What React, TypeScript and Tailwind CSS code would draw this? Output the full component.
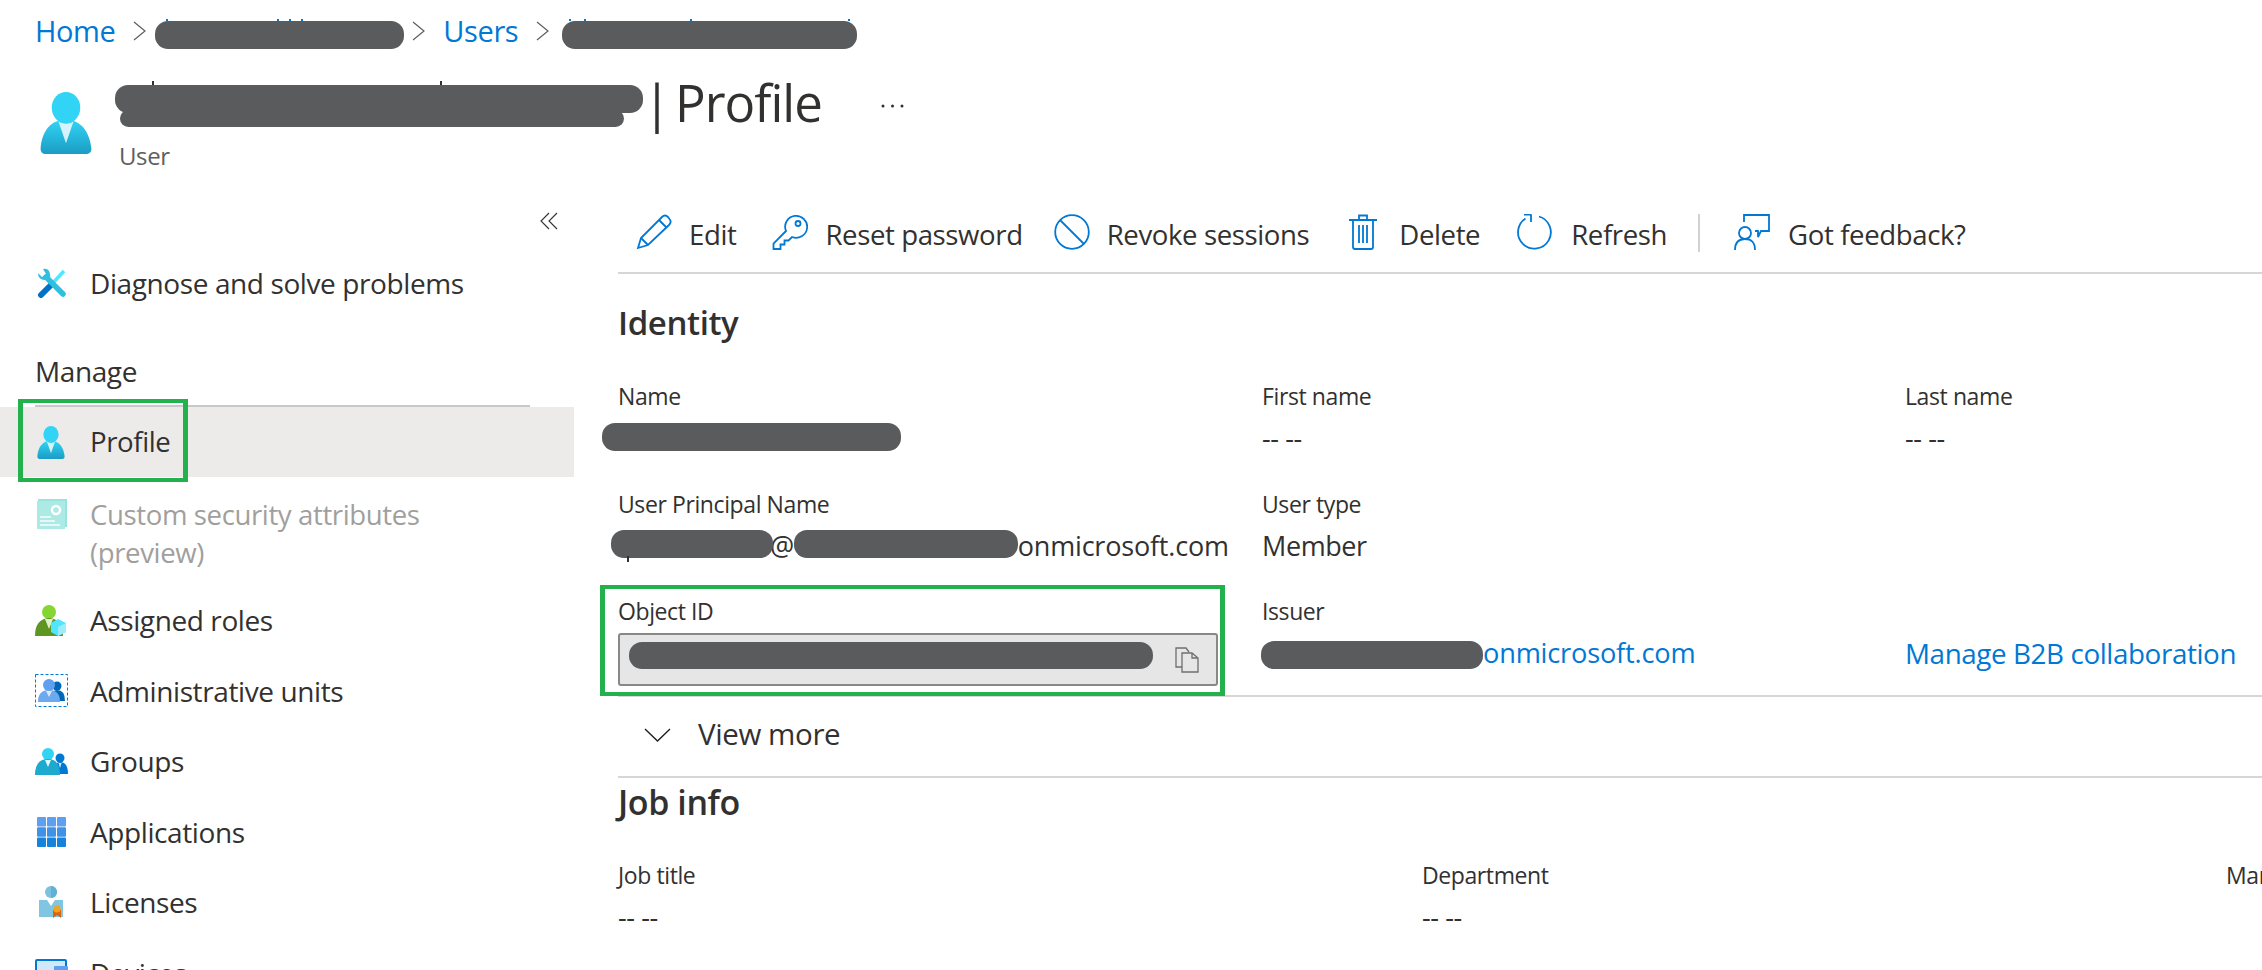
import React from "react";

type IconProps = { className?: string };

// azure style person, shared by the header and the profile row
const PersonIcon = ({ className, id }: IconProps & { id: string }) => (
  <svg viewBox="0 0 18 18" preserveAspectRatio="none" className={className}>
    <defs>
      <linearGradient id={`${id}-a`} x1="0" y1="0" x2="0" y2="1">
        <stop offset="0" stopColor="#32d4f5" />
        <stop offset="1" stopColor="#1b9cc4" />
      </linearGradient>
    </defs>
    <path d="M15.72 18a1.45 1.45 0 0 0 1.45-1.45.47.47 0 0 0 0-.17C16.59 11.81 14 8.09 9 8.09s-7.66 3.24-8.17 8.3A1.46 1.46 0 0 0 2.14 18z" fill={`url(#${id}-a)`} />
    <path d="M9 9.17a4.59 4.59 0 0 1-2.48-.73L9 14.86l2.44-6.38A4.53 4.53 0 0 1 9 9.17z" fill="#fff" opacity=".8" />
    <circle cx="9" cy="4.58" r="4.58" fill="#32d4f5" />
  </svg>
);

const DiagnoseIcon = ({ className }: IconProps) => (
  <svg viewBox="0 0 30 30" className={className}>
    <path d="M27 3 L15 16" stroke="#50e6ff" strokeWidth="3.500" />
    <path d="M14 17 L4 27" stroke="#0072c6" strokeWidth="6" strokeLinecap="round" />
    <path d="M9 9 L26 26" stroke="#32bedd" strokeWidth="5.500" strokeLinecap="round" />
    <path d="M1 5 L5 9 L9 6 L6 1 Q12 0 13 6 Q14 10 11 12 L7 12 Q1 11 1 5 Z" fill="#32bedd" />
  </svg>
);

const CustomAttrIcon = ({ className }: IconProps) => (
  <svg viewBox="0 0 30 30" className={className}>
    <rect x="1" y="0" width="29" height="28" fill="#8fe0da" />
    <rect x="0" y="2" width="28" height="28" fill="#a3e8e3" />
    <circle cx="19" cy="11" r="4" fill="none" stroke="#fff" strokeWidth="2.500" />
    <path d="M3 18h11M3 22h15M3 26h20" stroke="#e4f8f6" strokeWidth="2" />
  </svg>
);

const RolesIcon = ({ className }: IconProps) => (
  <svg viewBox="0 0 31 31" className={className}>
    <circle cx="14" cy="7" r="7" fill="#86d633" />
    <path d="M0 31 Q0 14 14 13 Q28 14 28 31 Z" fill="#5e9624" />
    <path d="M10 14 L14 24 L18 14 Z" fill="#dff3c8" />
    <path d="M23 14 L31 18 V27 L23 31 L16 27 V18 Z" fill="#50e6ff" />
    <path d="M23 22 L31 18 V27 L23 31 Z" fill="#9cebff" />
  </svg>
);

const AdminUnitsIcon = ({ className }: IconProps) => (
  <svg viewBox="0 0 33 33" className={className}>
    <rect x=".5" y=".5" width="32" height="32" fill="none" stroke="#0078d4" strokeDasharray="3 2" />
    <circle cx="22" cy="12" r="4.500" fill="#0067b8" />
    <path d="M15 27 Q15 16 22 16 Q30 16 30 27 Z" fill="#0067b8" />
    <circle cx="14" cy="11" r="6" fill="#5ea0ef" />
    <path d="M3 28 Q3 16 14 16 Q25 16 25 28 Z" fill="#6ca9f1" />
    <path d="M11 17 L14 23 L17 17 Z" fill="#dbe9fb" />
  </svg>
);

const GroupsIcon = ({ className }: IconProps) => (
  <svg viewBox="0 0 33 27" className={className}>
    <circle cx="25" cy="10" r="4.500" fill="#0078d4" />
    <path d="M19 26 Q19 14 25 14 Q33 14 33 26 Z" fill="#0078d4" />
    <path d="M23.500 15 L25 20 L26.500 15 Z" fill="#dbe9fb" />
    <circle cx="13" cy="6" r="6" fill="#32d4f5" />
    <path d="M0 27 Q0 11 13 11 Q25 11 25 27 Z" fill="#1ea9cf" />
    <path d="M10 12 L13 19 L16 12 Z" fill="#e3f8fc" />
  </svg>
);

const AppsIcon = ({ className }: IconProps) => (
  <svg viewBox="0 0 29 30" className={className}>
    {[0, 1, 2].map((row) =>
      [0, 1, 2].map((col) => (
        <rect key={`${row}-${col}`} x={col * 10} y={row * 10.2} width="9" height="9.500" rx="1" fill={["#5ea0ef", "#3f92e6", "#1582dc"][row]} />
      ))
    )}
  </svg>
);

const LicensesIcon = ({ className }: IconProps) => (
  <svg viewBox="0 0 24 32" className={className}>
    <circle cx="12" cy="6" r="6" fill="#7cc1de" />
    <path d="M12 0 A6 6 0 0 1 12 12 Z" fill="#5fb2d3" />
    <path d="M0 14 L8 14 L12 20 L16 14 L24 14 V31 H0 Z" fill="#80c5e2" />
    <path d="M14 24 V32 L18 29 L22 32 V24 Z" fill="#d9660f" />
    <circle cx="18" cy="23" r="3.500" fill="#f2a41f" />
  </svg>
);

const DevicesIcon = ({ className }: IconProps) => (
  <svg viewBox="0 0 33 28" className={className}>
    <rect x="1" y="1" width="30" height="24" rx="1" fill="#cfe8fa" stroke="#0078d4" strokeWidth="2" />
    <rect x="19" y="7" width="14" height="21" rx="1" fill="#5ea0ef" />
  </svg>
);

const blue = { fill: "none", stroke: "#0078d4", strokeWidth: 1.8 };

const PencilIcon = () => (
  <svg viewBox="0 0 36 36" className="w-[36px] h-[36px]" {...blue}>
    <path d="M2 34 L5 24 L26 3 Q29 0 32 3 L33.500 5 Q36 8 33 11 L12 31 Z" />
    <path d="M5 24 L12 31 M23 6 L30.500 13.500" />
  </svg>
);
const KeyIcon = () => (
  <svg viewBox="0 0 36 36" className="w-[36px] h-[36px]" {...blue}>
    <path d="M14 17 L1.500 29.500 V35 H8.500 V30.500 H12.500 V26.500 H16.500 L20 23 A11 11 0 1 0 14 17 Z" />
    <circle cx="26" cy="9.500" r="2.500" />
  </svg>
);
const RevokeIcon = () => (
  <svg viewBox="0 0 36 36" className="w-[36px] h-[36px]" {...blue}>
    <circle cx="18" cy="18" r="16.800" />
    <path d="M6 6 L30 30" />
  </svg>
);
const TrashIcon = () => (
  <svg viewBox="0 0 28 36" className="w-[28px] h-[36px]" {...blue}>
    <path d="M0 6 H28 M4 6 V33 Q4 35 6 35 H22 Q24 35 24 33 V6 M10 6 V1.500 H18 V6 M10 11 V29 M14 11 V29 M18 11 V29" />
  </svg>
);
const RefreshIcon = () => (
  <svg viewBox="0 0 36 36" className="w-[36px] h-[36px]" {...blue}>
    <path d="M23 2.500 A16.400 16.400 0 1 1 9.500 4.500" />
    <path d="M8 0.500 H15.500 M15 0.500 V8" />
  </svg>
);
const FeedbackIcon = () => (
  <svg viewBox="0 0 36 36" className="w-[36px] h-[36px]" {...blue}>
    <path d="M10 8 V1 H35 V17 H27 L24 23 V17 H21" />
    <circle cx="11" cy="19" r="6" />
    <path d="M1 36 Q1 25 11 25 Q21 25 21 36" />
  </svg>
);
const CopyIcon = () => (
  <svg viewBox="0 0 24 26" className="w-[24px] h-[26px]" fill="none" stroke="#6f6f6f" strokeWidth="1.300">
    <path d="M7 20 H1 V1 H11 L14 5" />
    <path d="M7 6 H17 L23 11 V25 H7 Z M17 6 V11 H23" />
  </svg>
);

// the grey blobs somebody painted over private values
const Blob = ({ className }: IconProps) => <span className={`block bg-[#5a5b5d] rounded-[13px] ${className}`} />;

// ascender tips of the hidden text, they stick out above the blobs
const Tip = ({ className }: IconProps) => <span className={`absolute w-[2px] ${className}`} />;

const Chevron = ({ className }: IconProps) => (
  <svg viewBox="0 0 13 20" className={`w-[13px] h-[20px] ${className}`} fill="none" stroke="#605e5c" strokeWidth="1.200">
    <path d="M1 1 L12 10 L1 19" />
  </svg>
);

const Field = ({ label, value, empty }: { label: string; value?: React.ReactNode; empty?: boolean }) => (
  <div>
    <div className="h-[34px] leading-[34px] text-[23px] text-[#323130]">{label}</div>
    <div className="h-[54px] leading-[50px] text-[27px] text-[#323130]">{value ?? (empty ? null : "-- --")}</div>
  </div>
);

const navRows: { label: string; icon: React.ReactNode }[] = [
  { label: "Assigned roles", icon: <RolesIcon className="w-[31px] h-[31px]" /> },
  { label: "Administrative units", icon: <AdminUnitsIcon className="w-[33px] h-[33px]" /> },
  { label: "Groups", icon: <GroupsIcon className="w-[33px] h-[27px]" /> },
  { label: "Applications", icon: <AppsIcon className="w-[29px] h-[30px] ml-[2px]" /> },
  { label: "Licenses", icon: <LicensesIcon className="w-[24px] h-[32px] ml-[4px]" /> },
  { label: "Devices", icon: <DevicesIcon className="w-[33px] h-[28px]" /> },
];

const tools = [
  { label: "Edit", icon: <PencilIcon />, left: "ml-0", gap: "gap-[17px]" },
  { label: "Reset password", icon: <KeyIcon />, left: "ml-[36px]", gap: "gap-[17px]" },
  { label: "Revoke sessions", icon: <RevokeIcon />, left: "ml-[31px]", gap: "gap-[17px]" },
  { label: "Delete", icon: <TrashIcon />, left: "ml-[40px]", gap: "gap-[22px]" },
  { label: "Refresh", icon: <RefreshIcon />, left: "ml-[36px]", gap: "gap-[19px]" },
];

export default function App() {
  return (
    <div className="w-[2262px] h-[970px] overflow-hidden bg-white text-[#323130] font-['Open_Sans',sans-serif] text-[27.6px] tracking-[-0.4px]">
      {/* breadcrumb */}
      <nav className="h-[62px] pl-[35px] flex items-center text-[#0078d4] text-[29px]">
        <span>Home</span>
        <Chevron className="ml-[18px]" />
        <div className="relative ml-[9px] mt-[8px]">
          <Tip className="left-[11px] top-[-2px] h-[2px] bg-[#0078d4]" />
          <Tip className="left-[122px] top-[-2px] h-[2px] bg-[#0078d4]" />
          <Tip className="left-[134px] top-[-2px] h-[2px] bg-[#0078d4]" />
          <Tip className="left-[146px] top-[-2px] h-[2px] bg-[#0078d4]" />
          <Blob className="w-[249px] h-[28px]" />
        </div>
        <Chevron className="ml-[8px]" />
        <span className="ml-[18px]">Users</span>
        <Chevron className="ml-[18px]" />
        <div className="relative ml-[13px] mt-[8px]">
          <Tip className="left-[7px] top-[-2px] h-[2px] bg-[#0078d4]" />
          <Tip className="left-[22px] top-[-2px] h-[2px] bg-[#0078d4]" />
          <Tip className="left-[128px] top-[-2px] h-[2px] bg-[#0078d4]" />
          <Tip className="left-[286px] top-[-2px] h-[2px] bg-[#0078d4]" />
          <Blob className="w-[295px] h-[28px]" />
        </div>
      </nav>

      {/* title */}
      <header className="h-[128px] flex pl-[38px]">
        <PersonIcon id="hd" className="w-[56px] h-[62px] mt-[30px]" />
        <div className="ml-[21px]">
          <div className="flex items-start">
            <div className="relative w-[528px] h-[42px] mt-[23px]">
              <Tip className="left-[37px] top-[-4px] h-[4px] bg-[#323130]" />
              <Tip className="left-[325px] top-[-4px] h-[4px] bg-[#323130]" />
              <Blob className="w-[528px] h-[28px]" />
              <Blob className="absolute left-[5px] top-[25px] w-[504px] h-[17px] rounded-[8px]" />
            </div>
            <span className="flex text-[51px] leading-[66px] mt-[7px] tracking-[-1px]">
              <span>|</span>
              <span className="ml-[5px]">Profile</span>
            </span>
            <svg viewBox="0 0 23 4" className="w-[23px] h-[4px] ml-[59px] mt-[42px]" fill="#323130">
              <circle cx="2" cy="2" r="1.500" />
              <circle cx="11.500" cy="2" r="1.500" />
              <circle cx="21" cy="2" r="1.500" />
            </svg>
          </div>
          <div className="text-[24px] leading-[30px] text-[#605e5c] ml-[4px] mt-[6px]">User</div>
        </div>
      </header>

      <div className="flex">
        {/* left menu */}
        <aside className="w-[574px] shrink-0">
          <div className="h-[62px] flex justify-end items-center pr-[16px]">
            <svg viewBox="0 0 18 18" className="w-[18px] h-[18px]" fill="none" stroke="#323130" strokeWidth="1.100">
              <path d="M9 1 L1 9 L9 17 M17 1 L9 9 L17 17" />
            </svg>
          </div>
          <div className="h-[62px] flex items-center pl-[37px]">
            <DiagnoseIcon className="w-[30px] h-[30px]" />
            <span className="ml-[23px] text-[28px]">Diagnose and solve problems</span>
          </div>
          <div className="mx-[35px] mt-[34px] mb-[11px] h-[46px] leading-[46px] font-medium w-[495px] text-[28px]">Manage</div>
          <div className="mx-[35px] w-[495px] h-[2px] bg-[#c8c8c8]" />
          <div className="relative h-[70px] bg-[#edebe9] flex items-center pl-[36px]">
            <PersonIcon id="nav" className="w-[30px] h-[33px]" />
            <span className="ml-[24px]">Profile</span>
            <div className="absolute left-[18px] top-[-8px] w-[170px] h-[83px] border-x-[5px] border-y-[4px] border-[#22b14c]" />
          </div>
          <div className="h-[108px] pt-[18px] pl-[37px] flex items-start text-[#a19f9d] leading-[38px]">
            <CustomAttrIcon className="w-[30px] h-[30px] mt-[4px] opacity-90" />
            <span className="ml-[23px]">
              Custom security attributes
              <br />
              (preview)
            </span>
          </div>
          {navRows.map((r) => (
            <div key={r.label} className="h-[70.5px] flex items-center text-[28px]">
              <div className="w-[90px] shrink-0 pl-[35px] flex">{r.icon}</div>
              <span>{r.label}</span>
            </div>
          ))}
        </aside>

        {/* detail pane */}
        <main className="flex-1 pl-[44px] min-w-0">
          <div className="h-[84px] flex items-center pt-[3px] pl-[18px] border-b-2 border-[#d6d6d6] text-[27.6px]">
            {tools.map((t) => (
              <div key={t.label} className={`flex items-center ${t.left} ${t.gap}`}>
                {t.icon}
                <span className="pt-[5px]">{t.label}</span>
              </div>
            ))}
            <div className="ml-[31px] w-[2px] h-[38px] bg-[#d2d2d2]" />
            <div className="ml-[34px] flex items-center gap-[18px]">
              <FeedbackIcon />
              <span className="pt-[5px]">Got feedback?</span>
            </div>
          </div>

          <h2 className="mt-[26px] mb-[33px] h-[46px] leading-[46px] text-[33px] font-semibold">Identity</h2>
          <div className="grid grid-cols-[644px_643px_1fr] grid-rows-[107.5px_107.5px_103px] h-[318px] border-b-2 border-[#d6d6d6]">
            <Field label="Name" value={<Blob className="w-[299px] h-[28px] ml-[-16px] translate-y-[10px]" />} />
            <Field label="First name" />
            <Field label="Last name" />
            <Field
              label="User Principal Name"
              value={
                <span className="flex items-center">
                  <span className="relative">
                    <Tip className="left-[9px] top-[26px] h-[6px] bg-[#323130]" />
                    <Blob className="w-[162px] h-[28px] ml-[-7px] mb-[3px]" />
                  </span>
                  <span className="ml-[-3px]">@</span>
                  <Blob className="w-[224px] h-[28px] mb-[3px]" />
                  <span className="tracking-[-0.2px]">onmicrosoft.com</span>
                </span>
              }
            />
            <Field label="User type" value="Member" />
            <div />
            <div className="relative">
              <div className="h-[34px] leading-[34px] text-[23px]">Object ID</div>
              <div className="mt-[5px] w-[600px] h-[53px] bg-[#e6e6e6] border-2 border-[#8a8886] rounded-[3px] flex items-center pl-[9px]">
                <Blob className="w-[524px] h-[27px] mb-[8px]" />
                <span className="ml-[22px]">
                  <CopyIcon />
                </span>
              </div>
              <div className="absolute left-[-18px] top-[-9px] w-[625px] h-[111px] border-x-[5px] border-y-[4px] border-[#22b14c]" />
            </div>
            <Field
              label="Issuer"
              value={
                <span className="flex items-center text-[#0078d4] text-[27.2px]">
                  <Blob className="w-[222px] h-[28px] ml-[-1px] mt-[4px]" />
                  <span className="tracking-[-0.2px]">onmicrosoft.com</span>
                </span>
              }
            />
            <Field label="" value={<span className="text-[#0078d4] text-[27.8px]">Manage B2B collaboration</span>} />
          </div>

          <div className="h-[81px] flex items-center pb-[4px] pl-[26px] border-b-2 border-[#d6d6d6]">
            <svg viewBox="0 0 27 14" className="w-[27px] h-[14px]" fill="none" stroke="#201f1e" strokeWidth="1.400">
              <path d="M1 1 L13.500 13 L26 1" />
            </svg>
            <span className="ml-[27px] text-[29.5px]">View more</span>
          </div>

          <h2 className="h-[48px] leading-[48px] text-[34px] font-semibold">Job info</h2>
          <div className="mt-[32px] grid grid-cols-[804px_804px_1fr]">
            <Field label="Job title" />
            <Field label="Department" />
            <Field label="Manager" empty />
          </div>
        </main>
      </div>
    </div>
  );
}
